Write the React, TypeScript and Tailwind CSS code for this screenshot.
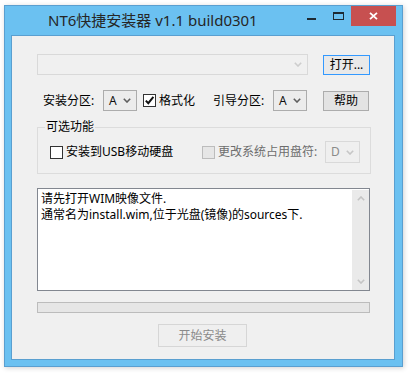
import React from 'react';

const font = "font-['Noto_Sans','Noto_Sans_CJK_SC',sans-serif]";

function Chevron({ color = '#5f5f5f' }: { color?: string }) {
  return (
    <svg width="8" height="5" viewBox="0 0 8 5">
      <path d="M0.8 0.8 L4 4 L7.2 0.8" fill="none" stroke={color} strokeWidth="1.6" />
    </svg>
  );
}

function ChevronUp({ color = '#c4c4c4' }: { color?: string }) {
  return (
    <svg width="8" height="5" viewBox="0 0 8 5">
      <path d="M0.8 4.2 L4 1 L7.2 4.2" fill="none" stroke={color} strokeWidth="1.6" />
    </svg>
  );
}

function DriveSelect({ value, disabled = false, w = 'w-[34px]' }: { value: string; disabled?: boolean; w?: string }) {
  return (
    <div
      className={`${w} h-full flex items-center justify-between pl-[5px] pr-[5px] border ${
        disabled ? 'border-[#d9d9d9] bg-[#efefef] text-[#8a8a8a]' : 'border-[#acacac] bg-[#ececec] text-[#111111]'
      }`}
    >
      <span className="text-[12px] leading-none">{value}</span>
      <Chevron color={disabled ? '#c6c6c6' : '#5f5f5f'} />
    </div>
  );
}

function CheckBox({ checked = false, disabled = false }: { checked?: boolean; disabled?: boolean }) {
  return (
    <div
      className={`w-[13px] h-[13px] shrink-0 border ${
        disabled ? 'border-[#bcbcbc] bg-[#e6e6e6]' : 'border-[#333333] bg-white'
      } flex items-center justify-center`}
    >
      {checked && (
        <svg width="11" height="11" viewBox="0 0 11 11">
          <path d="M1.8 5.6 L4.3 8.2 L9.4 1.8" fill="none" stroke="#111" strokeWidth="2" />
        </svg>
      )}
    </div>
  );
}

export default function App() {
  return (
    <div className={`min-h-[376px] bg-white pt-[5px] pl-[4px] ${font}`}>
      <div className="w-[399px] h-[362px] border border-[#5a9fd0] bg-[#6bc1f1] flex flex-col shadow-[1px_1px_5px_rgba(0,0,0,0.18)]">
        {/* title bar */}
        <div className="h-[29px] flex items-start shrink-0">
          <span className="ml-[43px] pt-[4px] text-[15px] leading-[20px] text-[#262626]">
            NT6快捷安装器 v1.1 build0301
          </span>
          <div className="ml-auto flex items-start">
            <div className="mt-[12px] w-[9px] h-[2px] bg-[#1d2a33]" />
            <div className="ml-[17px] mt-[6px] w-[11px] h-[8px] border border-[#1d2a33] border-t-2" />
            <div className="ml-[7px] mr-[6px] w-[45px] h-[20px] bg-[#c75050] flex items-center justify-center">
              <svg width="9" height="8" viewBox="0 0 9 8">
                <path d="M1 0.8 L8 7.2 M8 0.8 L1 7.2" stroke="#ffffff" strokeWidth="1.8" />
              </svg>
            </div>
          </div>
        </div>

        {/* client */}
        <div className="ml-[6px] w-[384px] h-[325px] border border-[#5a9fd0] bg-[#f0f0f0] text-[12px] text-black flex flex-col">
          {/* row 1 */}
          <div className="mt-[18px] ml-[25px] flex items-start">
            <div className="w-[271px] h-[21px] border border-[#d9d9d9] bg-[#f0f0f0] flex items-center justify-end pr-[5px]">
              <Chevron color="#cdcdcd" />
            </div>
            <div className="ml-[15px] mt-[1px] w-[47px] h-[20px] border border-[#3399ff] bg-[#e9e9e9] flex items-center justify-center leading-none">
              打开...
            </div>
          </div>

          {/* row 2 */}
          <div className="mt-[15px] ml-[31px] h-[21px] flex items-center">
            <span className="w-[60px] leading-none">安装分区:</span>
            <DriveSelect value="A" />
            <div className="ml-[6px]">
              <CheckBox checked />
            </div>
            <span className="ml-[3px] w-[54px] leading-none">格式化</span>
            <span className="w-[60px] leading-none">引导分区:</span>
            <DriveSelect value="A" />
            <div className="ml-[16px] w-[46px] h-[20px] border border-[#acacac] bg-[#e3e3e3] flex items-center justify-center leading-none">
              帮助
            </div>
          </div>

          {/* group */}
          <div className="relative mt-[16px] ml-[25px] w-[334px] h-[47px] border border-[#dcdcdc]">
            <span className="absolute left-[7px] top-[-8px] px-[1px] bg-[#f0f0f0] leading-[14px]">可选功能</span>
            <div className="mt-[13px] h-[22px] flex items-center">
              <div className="ml-[12px]">
                <CheckBox />
              </div>
              <span className="ml-[3px] w-[136px] leading-none">安装到USB移动硬盘</span>
              <CheckBox disabled />
              <span className="ml-[3px] w-[107px] leading-none text-[#6d6d6d]">更改系统占用盘符:</span>
              <DriveSelect value="D" disabled w="w-[35px]" />
            </div>
          </div>

          {/* log */}
          <div className="mt-[14px] ml-[25px] w-[333px] h-[103px] border border-[#828790] bg-white flex">
            <div className="flex-1 pl-[3px] pt-[2px] leading-[16px]">
              <div>请先打开WIM映像文件.</div>
              <div>通常名为install.wim,位于光盘(镜像)的sources下.</div>
            </div>
            <div className="w-[17px] mt-[1px] bg-[#eaeaea] flex flex-col items-center justify-between py-[6px]">
              <ChevronUp />
              <Chevron color="#c4c4c4" />
            </div>
          </div>

          {/* progress */}
          <div className="mt-[11px] ml-[25px] w-[333px] h-[11px] border border-[#bcbcbc] bg-[#e6e6e6]" />

          {/* start */}
          <div className="mt-[11px] ml-[146px] w-[89px] h-[23px] border border-[#d6d6d6] bg-[#efefef] text-[#8a8a8a] flex items-center justify-center leading-none">
            开始安装
          </div>
        </div>
      </div>
    </div>
  );
}
